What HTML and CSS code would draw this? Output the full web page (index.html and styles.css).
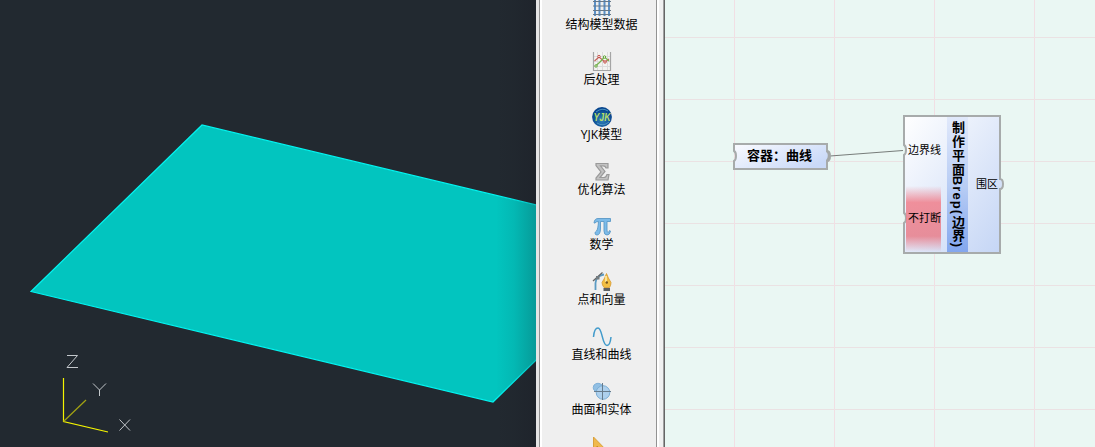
FILE: index.html
```html
<!DOCTYPE html>
<html lang="zh-CN">
<head>
<meta charset="utf-8">
<title>Modeler</title>
<link rel="stylesheet" href="styles.css">
</head>
<body>
<main class="app">
  <section class="viewport">
    <svg class="scene" width="536" height="447" viewBox="0 0 536 447">
      <path d="M202 125L31 291.5L493 402L664 235.500Z" fill="#02c5bf" stroke="#03f4f0" stroke-width="1.2"/>
      <g fill="none" stroke="#f4f400" stroke-width="1.2">
        <path d="M63.500 378V421.500L108 432"/>
        <path d="M63.500 421.500L86 400" stroke="#a3a313"/>
      </g>
      <g fill="none" stroke="#c4c8cc" stroke-width="1">
        <path d="M67 355.500H77.500L67 367.500H78"/>
        <path d="M93 383.500L99.500 390L106 383.500M99.500 390V396"/>
        <path d="M119.500 419.500L130 430.500M130 419.500L119.500 430.500"/>
      </g>
    </svg>
    <div class="edge-shade"></div>
  </section>

  <nav class="sidebar">
    <ul class="tools">
      <li class="tool">
        <svg class="icon" viewBox="0 0 20 20"><g fill="none"><path d="M3 1V19M7.500 1V19M12.500 1V19M17 1V19" stroke="#5b91c8" stroke-width="2"/><path d="M1 4.500H19M1 9H19M1 13.500H19M1 17.500H19" stroke="#66788a" stroke-width="1.200"/></g></svg>
        <span class="label">结构模型数据</span>
      </li>
      <li class="tool">
        <svg class="icon" viewBox="0 0 20 20"><path d="M1 0H19V19H1Z" fill="#f3f3f1"/><path d="M5.500 0V18M10.500 0V18M15.500 0V18M1 4.500H19M1 9.500H19M1 14.500H19" stroke="#dcdcdc"/><path d="M1.500 0V18.500H18.500V0" fill="none" stroke="#a5a5a5" stroke-width="1.200"/><path d="M2.500 9L7 5L13 10L17 7" fill="none" stroke="#c4615a" stroke-width="1.200"/><path d="M3.500 14L8 10L12.500 5L17 9" fill="none" stroke="#77b34d" stroke-width="1.200"/><g fill="#fff" stroke-width="1"><circle cx="7" cy="4.500" r="1.200" stroke="#c34b43"/><circle cx="13" cy="10" r="1.200" stroke="#c34b43"/><circle cx="4" cy="14" r="1.200" stroke="#5ba32e"/><circle cx="12.500" cy="5" r="1.200" stroke="#5ba32e"/></g></svg>
        <span class="label">后处理</span>
      </li>
      <li class="tool">
        <svg class="icon" viewBox="0 0 20 20"><defs><radialGradient id="globe" cy=".65"><stop offset="0" stop-color="#3184bc"/><stop offset="1" stop-color="#07458e"/></radialGradient></defs><circle cx="10" cy="10" r="9.900" fill="url(#globe)"/><path d="M4 5Q10 0 16 4M5 16Q11 20 17 15" fill="none" stroke="#4b93c2"/><text class="globe-text" x="10" y="13.500" textLength="17" lengthAdjust="spacingAndGlyphs">YJK</text></svg>
        <span class="label">YJK模型</span>
      </li>
      <li class="tool">
        <svg class="icon" viewBox="0 0 20 20"><path d="M4 1.500H16V6H14Q13.500 3.800 11 3.800H8.500L13 9.500L8 15.500H12Q14 15.500 15 12.500H17L16 18H4V16L9 10L4 3.500Z" fill="#c2c2c2" stroke="#9a9a9a" stroke-width="1.200"/></svg>
        <span class="label">优化算法</span>
      </li>
      <li class="tool">
        <svg class="icon" viewBox="0 0 20 20"><path d="M2 6Q2.500 1.500 6 1.500H18.500V4.500H15V13Q15 15.500 16 15.500Q17 15.500 17.500 13.500L18.500 14Q18 18 15 18Q12 18 12 14V4.500H8.500V11Q8.500 18 5 18Q3 18 3 16Q3 15 4.500 14Q6 12.500 6.500 4.500Q4 4.500 3 6Z" fill="#7cbbe9" stroke="#5a98c6" stroke-width=".9"/></svg>
        <span class="label">数学</span>
      </li>
      <li class="tool">
        <svg class="icon" viewBox="0 0 20 20"><path d="M3.500 18V11Q3.500 4 12 2.500" fill="none" stroke="#5b9bc3" stroke-width="1.800"/><path d="M1 9L10.500 .5" stroke="#666" stroke-width="1.300"/><path d="M4 4H7.500V7.500H4Z" fill="#747c80"/><path d="M14.500 1.500Q16 6 19 10.500Q19 13.500 17.500 15.500H12Q10 13 10 10.500Q13 6 14.500 1.500Z" fill="#f3bf43" stroke="#d6982f" stroke-width=".8"/><path d="M14 4V10" stroke="#fff0ae" stroke-width="1.500"/><circle cx="14.800" cy="10.500" r="1.200" fill="#74521e"/><path d="M11.500 16H18V19H11.500Z" fill="#5c5f61"/></svg>
        <span class="label">点和向量</span>
      </li>
      <li class="tool">
        <svg class="icon" viewBox="0 0 20 20"><path d="M1.500 10C2 4 3.500 1 6 1C10.500 1 10 18.500 15 18.500C17.500 18.500 18.500 15 19 10" fill="none" stroke="#429bcb" stroke-width="1.500"/></svg>
        <span class="label">直线和曲线</span>
      </li>
      <li class="tool">
        <svg class="icon" viewBox="0 0 20 20"><path d="M2 3Q6-.5 10 3L11 8L5 10Q-.5 8 2 3Z" fill="#91bfe3" stroke="#7fb0d8"/><circle cx="11" cy="10.500" r="6.800" fill="#add0ed" stroke="#79add5"/><path d="M2 9.500H19M10.500 1V18" stroke="#667b8c"/></svg>
        <span class="label">曲面和实体</span>
      </li>
      <li class="tool">
        <svg class="icon" viewBox="0 0 20 20"><path d="M1.500 0L19 18H1.500Z" fill="#f0b94c" stroke="#d9a03c"/><path d="M5 9L10 14H5Z" fill="#efefef" stroke="#c98d29"/></svg>
      </li>
    </ul>
  </nav>

  <section class="canvas">
    <svg class="wires" width="430" height="447"><path d="M165 156L238 150.500" stroke="#777d7a" stroke-width="1.100"/></svg>

    <div class="node container-node">
      <svg class="frame" width="100" height="29" viewBox="0 0 100 29">
        <defs><linearGradient id="nodeSmall" x2="1" y2=".6"><stop stop-color="#fafbff"/><stop offset="1" stop-color="#c9d9f8"/></linearGradient></defs>
        <path d="M2 2H95V9Q98 9 98 14Q98 19 95 19V27H2V19Q4 18 4 14Q4 10 2 9Z" fill="url(#nodeSmall)" stroke="#a7abab" stroke-width="2"/>
        <path d="M95 9Q97.500 11 97 14Q97 17 95 19" fill="none" stroke="#a4a8a8" stroke-width="2.500"/>
      </svg>
      <span class="node-title">容器：曲线</span>
    </div>

    <div class="node brep-node">
      <svg class="frame" width="103" height="141" viewBox="0 0 103 141">
        <defs><linearGradient id="nodeLarge" x2="1" y2="1"><stop stop-color="#ffffff"/><stop offset="1" stop-color="#c4d5f5"/></linearGradient></defs>
        <path d="M2 2H98V65Q101 65 101 70Q101 75 98 75V139H2V109Q4 108 4 104Q4 100 2 99V41Q4 40 4 36Q4 32 2 31Z" fill="url(#nodeLarge)" stroke="#a7abab" stroke-width="2"/>
      </svg>
      <div class="inputs">
        <span class="port">边界线</span>
        <span class="port warning">不打断</span>
      </div>
      <div class="band"><span class="vertical-title">制作平面<span class="latin">Brep(</span>边界)</span></div>
      <div class="outputs"><span class="port">围区</span></div>
    </div>
  </section>
</main>
</body>
</html>
```

FILE: styles.css
```css
* { box-sizing: border-box; }

body {
  margin: 0;
  font-family: "Liberation Sans", "Noto Sans CJK SC", sans-serif;
  color: #000;
}

.app {
  display: grid;
  grid-template-columns: 536px 129px 430px;
  height: 447px;
  overflow: hidden;
}

.viewport {
  position: relative;
  overflow: hidden;
  background: #222930;
}

.scene, .frame, .wires { display: block; }

.edge-shade {
  position: absolute;
  inset: 0 0 0 auto;
  width: 40px;
  background: linear-gradient(90deg, rgba(20, 20, 30, 0), rgba(20, 20, 30, .07) 45%, rgba(20, 20, 30, .24));
}

.sidebar {
  height: 447px;
  padding: 0 5px 0 6px;
  overflow: hidden;
  background: linear-gradient(90deg, #e5e5e5 0 3px, #929292 3px 4px, #fff 4px 6px, #efefef 6px 120px, #939393 120px 121px, #fff 121px 123px, #f0f0f0 123px 127px, #a0a0a0 127px 128px, #666 128px);
}

.tools {
  margin: -3px 0 0;
  padding: 0;
  list-style: none;
}

.tool {
  display: flex;
  flex-direction: column;
  align-items: center;
  height: 55px;
  padding-left: 1px;
}

.icon { display: block; width: 20px; height: 20px; flex: none; }

.globe-text {
  font: italic bold 10px "Liberation Sans", sans-serif;
  fill: #b7dc68;
  text-anchor: middle;
}

.label {
  font-family: "Open Sans", "Noto Sans CJK SC", sans-serif;
  font-size: 12px;
  line-height: 15px;
  white-space: nowrap;
}

.canvas {
  position: relative;
  overflow: hidden;
  background-color: #eaf7f3;
  background-image: linear-gradient(90deg, #f1dfe4 1px, transparent 1px), linear-gradient(#ebe2e3 1px, transparent 1px);
  background-size: 100px 100%, 100% 62px;
  background-position: 69px 0, 0 37px;
}

.node { position: absolute; }
.container-node { left: 67px; top: 142px; width: 100px; height: 29px; }
.brep-node {
  left: 237px;
  top: 114px;
  width: 103px;
  height: 141px;
  display: grid;
  grid-template-columns: 41px 21px 34px;
  padding: 3px 0 3px 4px;
}
.frame { position: absolute; inset: 0; }

.node-title {
  position: relative;
  display: block;
  padding-left: 15px;
  font-size: 13px;
  font-weight: 700;
  line-height: 27px;
  white-space: nowrap;
}

.inputs, .outputs, .band { position: relative; }
.inputs { display: grid; grid-template-rows: 69px 66px; width: 35px; }
.port {
  display: flex;
  align-items: center;
  font-size: 11px;
  line-height: 14px;
  white-space: nowrap;
}
.inputs .port { padding-left: 2px; padding-bottom: 3px; }
.inputs .warning {
  padding-bottom: 2px;
  background: linear-gradient(rgba(240, 130, 142, 0), rgba(240, 130, 142, .88) 25%, rgba(232, 124, 136, .84) 76%, rgba(238, 124, 134, 0));
}
.outputs { display: flex; align-items: center; padding: 0 0 1px 8px; }

.band {
  display: flex;
  justify-content: center;
  background: linear-gradient(#e1e9fb, #b7ccf4 52%, #83a7ee);
}
.vertical-title {
  writing-mode: vertical-rl;
  padding-top: 4px;
  font-size: 13px;
  font-weight: 700;
  line-height: 21px;
  letter-spacing: .7px;
  white-space: nowrap;
}
.latin { letter-spacing: 1.1px; }
```
